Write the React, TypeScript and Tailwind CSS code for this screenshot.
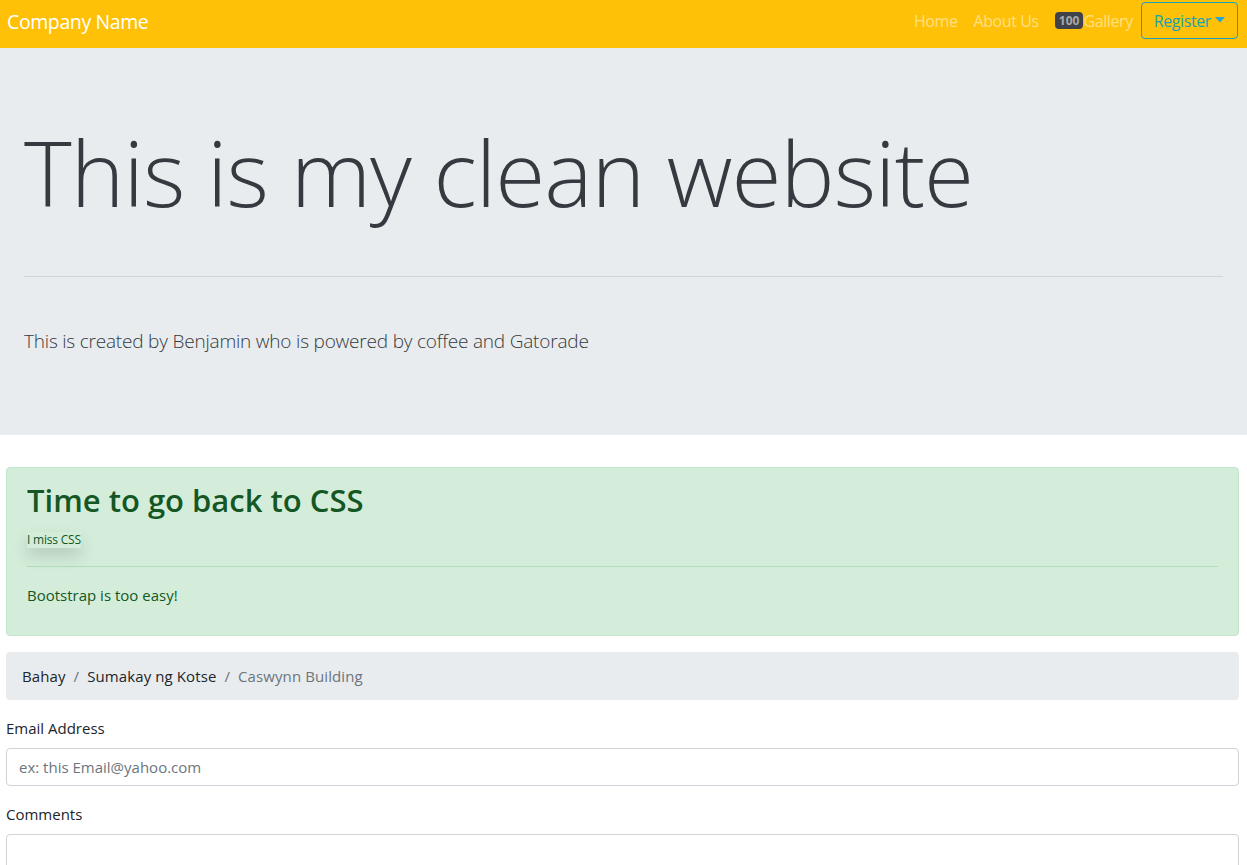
import type { ReactNode } from "react";

const font = { fontFamily: '"Open Sans", "Noto Sans", Arial, sans-serif' };

export default function App() {
  return (
    <div className="min-h-screen bg-white text-[#212529]" style={font}>
      <Navbar />
      <Jumbotron />
      <div className="pl-[6px] pr-[8px]">
        <div className="mb-4 rounded border border-[#c3e6cb] bg-[#d4edda] px-5 pt-[12px] pb-[28px] text-[#155724]">
          <h2 className="text-[31px] leading-[40px] font-semibold tracking-[0px]">
            Time to go back to CSS
          </h2>
          <div className="mt-[12px] inline-block text-[12px] leading-[16px] tracking-[-0.2px] shadow-[0_8px_16px_rgba(0,0,0,0.15)]">
            I miss CSS
          </div>
          <hr className="mt-[16px] mb-[16px] border-t border-[#b1dfbb]" />
          <p className="text-[15px] leading-[24px]">Bootstrap is too easy!</p>
        </div>

        <nav className="mb-4 flex items-center rounded bg-[#e9ecef] px-4 py-3 text-[15px] leading-[24px] tracking-[0.1px]">
          <Crumb>Bahay</Crumb>
          <Sep />
          <Crumb>Sumakay ng Kotse</Crumb>
          <Sep />
          <span className="text-[#6c757d]">Caswynn Building</span>
        </nav>

        <Field label="Email Address">
          <input
            type="email"
            placeholder="ex: this Email@yahoo.com"
            className="h-[38px] w-full rounded border border-[#ced4da] bg-white px-3 text-[15px] text-[#495057] outline-none placeholder:text-[#6c757d]"
          />
        </Field>
        <Field label="Comments">
          <textarea
            rows={3}
            className="block h-[86px] w-full resize-none rounded border border-[#ced4da] bg-white px-3 py-1.5 text-[15px] outline-none"
          />
        </Field>
      </div>
    </div>
  );
}

function Navbar() {
  return (
    <header className="flex h-12 items-start justify-between bg-[#ffc107] pl-[7px] pr-[9px]">
      <a href="#" className="mt-[8px] text-[19.5px] leading-[28px] tracking-[-0.4px] text-white">
        Company Name
      </a>
      <div className="mt-[2px] flex items-center text-[16px] tracking-[-0.4px] text-white/50">
        <a href="#" className="mr-4">
          Home
        </a>
        <a href="#" className="mr-4">
          About Us
        </a>
        <a href="#" className="mr-2 flex items-center">
          <span className="rounded-[4px] bg-[#3f4249] px-[4px] text-[12px] leading-[17px] font-bold tracking-[0px] text-[#a8a9ab]">
            100
          </span>
          Gallery
        </a>
        <button
          type="button"
          className="flex h-[37px] items-center gap-1 rounded border border-[#17a2b8] px-[12px] text-[16px] tracking-[-0.4px] text-[#17a2b8]"
        >
          Register
          <svg width="10" height="6" viewBox="0 0 10 6" className="mt-[-2px]">
            <path d="M0 0h10L5 5.5z" fill="#1fa6d6" />
          </svg>
        </button>
      </div>
    </header>
  );
}

function Jumbotron() {
  return (
    <section className="mb-8 h-[387px] bg-[#e9ecef] px-6 pt-[67px]">
      <h1 className="text-[91px] leading-[115px] font-light tracking-[-1px] text-[#343a40]">
        This is my clean website
      </h1>
      <hr className="mt-[46px] border-t border-black/10" />
      <p className="mt-[49px] text-[19px] leading-[30px] font-light tracking-[-0.2px] text-[#343a40]">
        This is created by Benjamin who is powered by coffee and Gatorade
      </p>
    </section>
  );
}

function Crumb({ children }: { children: ReactNode }) {
  return (
    <a href="#" className="text-[#212529]">
      {children}
    </a>
  );
}

function Sep() {
  return <span className="px-2 text-[#6c757d]">/</span>;
}

function Field({ label, children }: { label: string; children: ReactNode }) {
  return (
    <div className="mb-4">
      <label className="mb-2 block text-[15px] leading-[24px]">{label}</label>
      {children}
    </div>
  );
}
